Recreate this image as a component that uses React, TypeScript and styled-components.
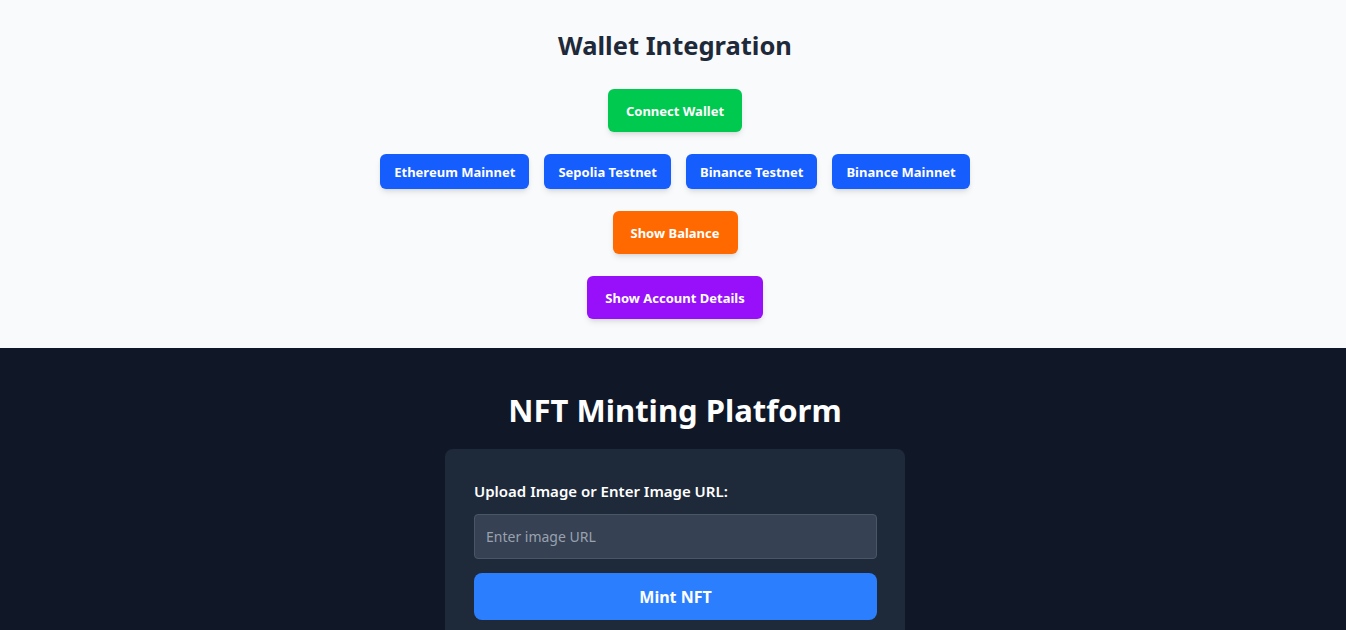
import React, { FC } from 'react';
import styled, { createGlobalStyle } from 'styled-components';

const GlobalStyle = createGlobalStyle`
  * { box-sizing: border-box; }
  body {
    margin: 0;
    font-family: "Noto Sans", "Open Sans", sans-serif;
    background: #101828;
  }
`;

export const WalletSection = styled.section`
  background-color: #f9fafb;
  display: flex;
  flex-direction: column;
  align-items: center;
  padding: 26px 0 29px 4px;
`;

export const WalletTitle = styled.h2`
  margin: 0 0 25px;
  font-size: 25.5px;
  line-height: 38px;
  font-weight: 700;
  color: #1e2939;
`;

export const Stack = styled.div`
  display: flex;
  flex-direction: column;
  align-items: center;
  gap: 22px;
`;

export const NetworkRow = styled.div`
  display: flex;
  gap: 15px;
`;

type Tone = 'green' | 'blue' | 'orange' | 'purple';

const tones: Record<Tone, string> = {
  green: '#00c950',
  blue: '#155dfc',
  orange: '#ff6900',
  purple: '#9810fa',
};

export const ActionButton = styled.button<{ $tone: Tone; $small?: boolean }>`
  border: none;
  cursor: pointer;
  font-family: inherit;
  font-size: 13px;
  font-weight: 700;
  color: #ffffff;
  background-color: ${({ $tone }) => tones[$tone]};
  border-radius: 6px;
  padding: ${({ $small }) => ($small ? '0 14px' : '0 18px')};
  height: ${({ $small }) => ($small ? '35px' : '43px')};
  box-shadow: 0 4px 6px -1px rgba(0, 0, 0, 0.1), 0 2px 4px -2px rgba(0, 0, 0, 0.1);
`;

export const MintSection = styled.section`
  background-color: #101828;
  display: flex;
  flex-direction: column;
  align-items: center;
  padding: 39px 0 0 4px;
  min-height: 282px;
`;

export const MintTitle = styled.h1`
  margin: 0 0 16px;
  font-size: 31px;
  line-height: 46px;
  font-weight: 700;
  color: #ffffff;
`;

export const Card = styled.div`
  width: 460px;
  background-color: #1e2939;
  border-radius: 8px;
  padding: 30px 28px 28px 29px;
  display: flex;
  flex-direction: column;
`;

export const FieldLabel = styled.label`
  font-size: 15px;
  line-height: 24px;
  font-weight: 600;
  color: #ffffff;
  margin-bottom: 11px;
`;

export const UrlInput = styled.input`
  height: 45px;
  background-color: #364153;
  border: 1px solid #4a5565;
  border-radius: 4px;
  padding: 0 11px;
  font-family: inherit;
  font-size: 14px;
  color: #ffffff;
  margin-bottom: 14px;
  outline: none;

  &::placeholder {
    color: #99a1af;
  }
`;

export const MintButton = styled.button`
  height: 47px;
  border: none;
  border-radius: 8px;
  background-color: #2b7fff;
  color: #ffffff;
  font-family: inherit;
  font-size: 16px;
  font-weight: 700;
  cursor: pointer;
`;

const networks = ['Ethereum Mainnet', 'Sepolia Testnet', 'Binance Testnet', 'Binance Mainnet'];

const App: FC = () => (
  <>
    <GlobalStyle />
    <WalletSection>
      <WalletTitle>Wallet Integration</WalletTitle>
      <Stack>
        <ActionButton $tone="green">Connect Wallet</ActionButton>
        <NetworkRow>
          {networks.map((n) => (
            <ActionButton key={n} $tone="blue" $small>
              {n}
            </ActionButton>
          ))}
        </NetworkRow>
        <ActionButton $tone="orange">Show Balance</ActionButton>
        <ActionButton $tone="purple">Show Account Details</ActionButton>
      </Stack>
    </WalletSection>
    <MintSection>
      <MintTitle>NFT Minting Platform</MintTitle>
      <Card>
        <FieldLabel>Upload Image or Enter Image URL:</FieldLabel>
        <UrlInput placeholder="Enter image URL" />
        <MintButton>Mint NFT</MintButton>
      </Card>
    </MintSection>
  </>
);

export default App;
